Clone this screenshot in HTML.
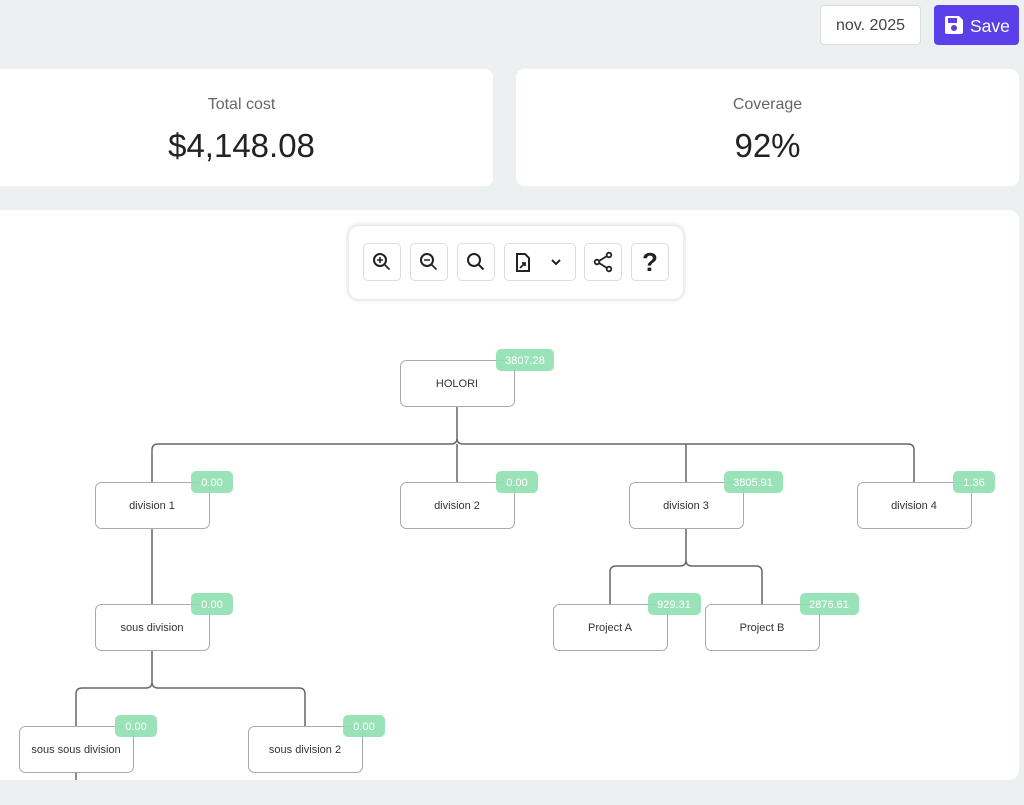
<!DOCTYPE html>
<html><head><style>
body{margin:0;width:1024px;height:805px;background:#edf0f1;font-family:"Liberation Sans",sans-serif;position:relative;overflow:hidden}
.abs{position:absolute}
.card{background:#fff;border-radius:8px;text-align:center}
.lbl{color:#666;font-size:16px;position:absolute;width:100%;top:27px}
.val{color:#222;font-size:33px;position:absolute;width:100%;top:58px}
.btn{position:absolute;top:243px;width:38px;height:38px;border:1px solid #ddd;border-radius:5px;background:#fff;box-sizing:border-box}
</style></head><body>
<div class="abs" style="left:820px;top:5px;width:101px;height:40px;background:#fff;border:1px solid #ddd;border-radius:4px;box-sizing:border-box;font-size:16px;color:#444;text-align:center;line-height:40px">nov. 2025</div>
<div class="abs" style="left:934px;top:5px;width:85px;height:40px;background:#5b3fe8;border-radius:4px;color:#fff;font-size:17px;line-height:42px">
<svg class="abs" style="left:9px;top:9px" width="22" height="22" viewBox="0 0 22 22"><path d="M2 4a2 2 0 0 1 2-2h12l4 4v12a2 2 0 0 1-2 2H4a2 2 0 0 1-2-2z" fill="#fff"/><rect x="5" y="4" width="9" height="5" fill="#5b3fe8"/><circle cx="11" cy="14" r="3" fill="#5b3fe8"/></svg>
<span class="abs" style="left:36px;font-size:17.5px">Save</span></div>
<div class="card abs" style="left:-10px;top:69px;width:503px;height:117px"><div class="lbl" style="padding-left:0;box-sizing:border-box">Total cost</div><div class="val" style="padding-left:0;box-sizing:border-box">$4,148.08</div></div>
<div class="card abs" style="left:516px;top:69px;width:503px;height:117px"><div class="lbl">Coverage</div><div class="val">92%</div></div>
<div class="abs" style="left:-10px;top:210px;width:1029px;height:570px;background:#fff;border-radius:10px"></div>
<div class="abs" style="left:349px;top:226px;width:334px;height:73px;background:#fff;border-radius:10px;box-shadow:0 0 4px 2px #e2e4e4"></div>
<div class="btn" style="left:363px"><svg width="36" height="36" viewBox="0 0 36 36" fill="none" stroke="#222" stroke-width="2"><circle cx="16" cy="16" r="6"/><path d="M20.5 20.5l5 5M16 13v6M13 16h6" stroke-width="1.6"/></svg></div>
<div class="btn" style="left:410px"><svg width="36" height="36" viewBox="0 0 36 36" fill="none" stroke="#222" stroke-width="2"><circle cx="16" cy="16" r="6"/><path d="M20.5 20.5l5 5M13 16h6" stroke-width="1.6"/></svg></div>
<div class="btn" style="left:457px"><svg width="36" height="36" viewBox="0 0 36 36" fill="none" stroke="#222" stroke-width="2"><circle cx="16" cy="16" r="6"/><path d="M20.5 20.5l5 5"/></svg></div>
<div class="btn" style="left:504px;width:72px"><svg width="70" height="36" viewBox="0 0 70 36" fill="none" stroke="#222" stroke-width="2"><path d="M12 10h8l4 4v13H12z"/><path d="M15 24l5-5M17 19h3v3" stroke-width="1.8"/><path d="M47 16l4 4 4-4"/></svg></div>
<div class="btn" style="left:584px"><svg width="36" height="36" viewBox="0 0 36 36" fill="none" stroke="#222" stroke-width="1.8"><circle cx="24" cy="11" r="2.3"/><circle cx="12" cy="18" r="2.3"/><circle cx="24" cy="25" r="2.3"/><path d="M14 17l8-5M14 19l8 5"/></svg></div>
<div class="btn" style="left:631px;font-size:26px;font-weight:bold;color:#222;text-align:center;line-height:36px">?</div>
<svg class="abs" style="left:0;top:0" width="1024" height="805" font-family="Liberation Sans,sans-serif" font-size="11">
<g fill="none" stroke="#666" stroke-width="1.5">
<path d="M457 406v32q0 6 6 6h445q6 0 6 6v32M457 438q0 6-6 6H158q-6 0-6 6v32M457 444v38M686 444v38"/>
<path d="M152 528v154q0 6-6 6H82q-6 0-6 6v32M152 682q0 6 6 6h141q6 0 6 6v32"/>
<path d="M686 528v32q0 6-6 6h-64q-6 0-6 6v32M686 560q0 6 6 6h64q6 0 6 6v32"/>
<path d="M76 772v40"/>
</g>
<g fill="#fff" stroke="#aaa" stroke-width="1">
<rect x="400.5" y="360.5" width="114" height="46" rx="6"/>
<rect x="95.5" y="482.5" width="114" height="46" rx="6"/>
<rect x="400.5" y="482.5" width="114" height="46" rx="6"/>
<rect x="629.5" y="482.5" width="114" height="46" rx="6"/>
<rect x="857.5" y="482.5" width="114" height="46" rx="6"/>
<rect x="95.5" y="604.5" width="114" height="46" rx="6"/>
<rect x="553.5" y="604.5" width="114" height="46" rx="6"/>
<rect x="705.5" y="604.5" width="114" height="46" rx="6"/>
<rect x="19.5" y="726.5" width="114" height="46" rx="6"/>
<rect x="248.5" y="726.5" width="114" height="46" rx="6"/>
</g>
<g fill="#333" text-anchor="middle">
<text x="457" y="387">HOLORI</text><text x="152" y="509">division 1</text><text x="457" y="509">division 2</text><text x="686" y="509">division 3</text><text x="914" y="509">division 4</text><text x="152" y="631">sous division</text><text x="610" y="631">Project A</text><text x="762" y="631">Project B</text><text x="76" y="753">sous sous division</text><text x="305" y="753">sous division 2</text>
</g>
<g fill="#8fe0b0" fill-opacity="0.9">
<rect x="496" y="349" width="58" height="22" rx="5"/>
<rect x="191" y="471" width="42" height="22" rx="5"/>
<rect x="496" y="471" width="42" height="22" rx="5"/>
<rect x="724" y="471" width="59" height="22" rx="5"/>
<rect x="953" y="471" width="42" height="22" rx="5"/>
<rect x="191" y="593" width="42" height="22" rx="5"/>
<rect x="648" y="593" width="53" height="22" rx="5"/>
<rect x="800" y="593" width="59" height="22" rx="5"/>
<rect x="115" y="715" width="42" height="22" rx="5"/>
<rect x="343" y="715" width="42" height="22" rx="5"/>
</g>
<g fill="#fff" text-anchor="middle">
<text x="525" y="364">3807.28</text><text x="212" y="486">0.00</text><text x="517" y="486">0.00</text><text x="753" y="486">3805.91</text><text x="974" y="486">1.36</text><text x="212" y="608">0.00</text><text x="674" y="608">929.31</text><text x="829" y="608">2876.61</text><text x="136" y="730">0.00</text><text x="364" y="730">0.00</text>
</g>
</svg>
<div class="abs" style="left:0;top:780px;width:1024px;height:25px;background:#edf0f1"></div>
</body></html>
